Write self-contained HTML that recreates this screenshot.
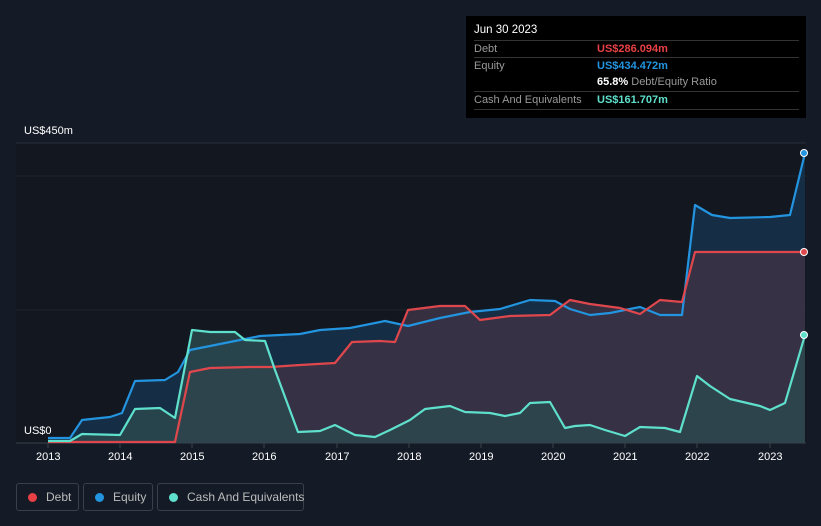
<!DOCTYPE html>
<html><head><meta charset="utf-8"><style>
body{margin:0;width:821px;height:526px;background:#151b26;font-family:"Liberation Sans",sans-serif;overflow:hidden;position:relative}
.tt{position:absolute;left:466px;top:16px;width:340px;height:102px;background:#000;font-size:11px;color:#999}
.tt .h{position:absolute;left:8px;top:8px;color:#fff;font-size:11.5px}
.row{position:absolute;left:8px;width:325px;border-top:1px solid #333;height:17px;line-height:17px}
.row span{position:absolute;left:123px;font-weight:bold}
.lg{position:absolute;top:483px;height:26px;border:1px solid #3a404b;border-radius:3px;color:#bbb;font-size:12px;line-height:26px;white-space:nowrap;box-sizing:border-box;height:28px}
.dot{display:inline-block;width:9px;height:9px;border-radius:50%;margin:0 9px 0 11px;vertical-align:-1px}
.ax{position:absolute;color:#fff;font-size:11px}
</style></head><body>
<svg width="821" height="526" style="position:absolute;left:0;top:0">
<rect x="16" y="143" width="790" height="300" fill="#121720"/>
<line x1="16" y1="143" x2="806" y2="143" stroke="#2a303a"/>
<line x1="16" y1="176" x2="806" y2="176" stroke="#1f2530"/>
<line x1="16" y1="310" x2="806" y2="310" stroke="#1f2530"/>
<line x1="16" y1="443" x2="806" y2="443" stroke="#3a404b"/>
<path d="M48,438 L70,438 L82,420 L110,417 L122,413 L135,381 L165,380 L178,372 L190,350 L210,346 L240,340 L260,336 L300,334 L320,330 L350,328 L385,321 L408,326 L440,318 L470,312 L500,309 L530,300 L555,301 L570,309 L590,315 L610,313 L640,307 L660,315 L682,315 L695,205 L712,215 L730,218 L770,217 L790,215 L805,153 L805,443 L48,443Z" fill="#17334c" opacity="0.85"/>
<path d="M48,442 L175,442 L190,372 L210,368 L250,367 L270,367 L300,365 L335,363 L352,342 L380,341 L395,342 L408,310 L440,306 L465,306 L480,320 L510,316 L550,315 L570,300 L590,304 L620,308 L640,314 L660,300 L682,302 L695,252 L805,252 L805,443 L48,443Z" fill="#3a3244" opacity="0.9"/>
<path d="M48,441 L70,441 L82,434 L120,435 L135,409 L160,408 L175,418 L192,330 L210,332 L235,332 L245,340 L265,341 L275,370 L298,432 L320,431 L335,425 L355,435 L375,437 L390,430 L410,420 L425,409 L450,406 L465,412 L490,413 L505,416 L520,413 L530,403 L550,402 L565,428 L575,426 L590,425 L605,430 L625,436 L640,427 L665,428 L680,432 L697,376 L710,386 L730,399 L760,406 L770,410 L785,403 L805,335 L805,443 L48,443Z" fill="#2c4a4f" opacity="0.8"/>
<g fill="none" stroke-width="2.2" stroke-linejoin="round">
<path d="M48,438 L70,438 L82,420 L110,417 L122,413 L135,381 L165,380 L178,372 L190,350 L210,346 L240,340 L260,336 L300,334 L320,330 L350,328 L385,321 L408,326 L440,318 L470,312 L500,309 L530,300 L555,301 L570,309 L590,315 L610,313 L640,307 L660,315 L682,315 L695,205 L712,215 L730,218 L770,217 L790,215 L805,153" stroke="#2394df"/>
<path d="M48,442 L175,442 L190,372 L210,368 L250,367 L270,367 L300,365 L335,363 L352,342 L380,341 L395,342 L408,310 L440,306 L465,306 L480,320 L510,316 L550,315 L570,300 L590,304 L620,308 L640,314 L660,300 L682,302 L695,252 L805,252" stroke="#e0474c"/>
<path d="M48,441 L70,441 L82,434 L120,435 L135,409 L160,408 L175,418 L192,330 L210,332 L235,332 L245,340 L265,341 L275,370 L298,432 L320,431 L335,425 L355,435 L375,437 L390,430 L410,420 L425,409 L450,406 L465,412 L490,413 L505,416 L520,413 L530,403 L550,402 L565,428 L575,426 L590,425 L605,430 L625,436 L640,427 L665,428 L680,432 L697,376 L710,386 L730,399 L760,406 L770,410 L785,403 L805,335" stroke="#5ee0cc"/>
</g>
<circle cx="804" cy="153" r="3.5" fill="#2394df" stroke="#fff" stroke-width="1"/>
<circle cx="804" cy="252" r="3.5" fill="#e0474c" stroke="#fff" stroke-width="1"/>
<circle cx="804" cy="335" r="3.5" fill="#5ee0cc" stroke="#fff" stroke-width="1"/>
<g stroke="#3a404b"><line x1="48" y1="443" x2="48" y2="448"/><line x1="120" y1="443" x2="120" y2="448"/><line x1="192" y1="443" x2="192" y2="448"/><line x1="264" y1="443" x2="264" y2="448"/><line x1="337" y1="443" x2="337" y2="448"/><line x1="409" y1="443" x2="409" y2="448"/><line x1="481" y1="443" x2="481" y2="448"/><line x1="553" y1="443" x2="553" y2="448"/><line x1="625" y1="443" x2="625" y2="448"/><line x1="697" y1="443" x2="697" y2="448"/><line x1="770" y1="443" x2="770" y2="448"/></g>
</svg>
<div class="ax" style="left:24px;top:125px">US$450m</div>
<div class="ax" style="left:24px;top:425px">US$0</div>
<div class="ax" style="left:36px;top:451px">2013</div><div class="ax" style="left:108px;top:451px">2014</div><div class="ax" style="left:180px;top:451px">2015</div><div class="ax" style="left:252px;top:451px">2016</div><div class="ax" style="left:325px;top:451px">2017</div><div class="ax" style="left:397px;top:451px">2018</div><div class="ax" style="left:469px;top:451px">2019</div><div class="ax" style="left:541px;top:451px">2020</div><div class="ax" style="left:613px;top:451px">2021</div><div class="ax" style="left:685px;top:451px">2022</div><div class="ax" style="left:758px;top:451px">2023</div>
<div class="tt">
<div class="h">Jun 30 2023</div>
<div class="row" style="top:24px">Debt<span style="color:#e84045">US$286.094m</span></div>
<div class="row" style="top:41px">Equity<span style="color:#2394df">US$434.472m</span></div>
<div class="row" style="top:58px;border-top:none"><span style="color:#fff">65.8% <b style="color:#999;font-weight:normal">Debt/Equity Ratio</b></span></div>
<div class="row" style="top:75px">Cash And Equivalents<span style="color:#5ee0cc">US$161.707m</span></div>
<div class="row" style="top:93px;height:0"></div>
</div>
<div class="lg" style="left:16px;width:63px"><span class="dot" style="background:#e84045"></span>Debt</div>
<div class="lg" style="left:83px;width:70px"><span class="dot" style="background:#2394df"></span>Equity</div>
<div class="lg" style="left:157px;width:147px"><span class="dot" style="background:#5ee0cc"></span>Cash And Equivalents</div>
</body></html>
